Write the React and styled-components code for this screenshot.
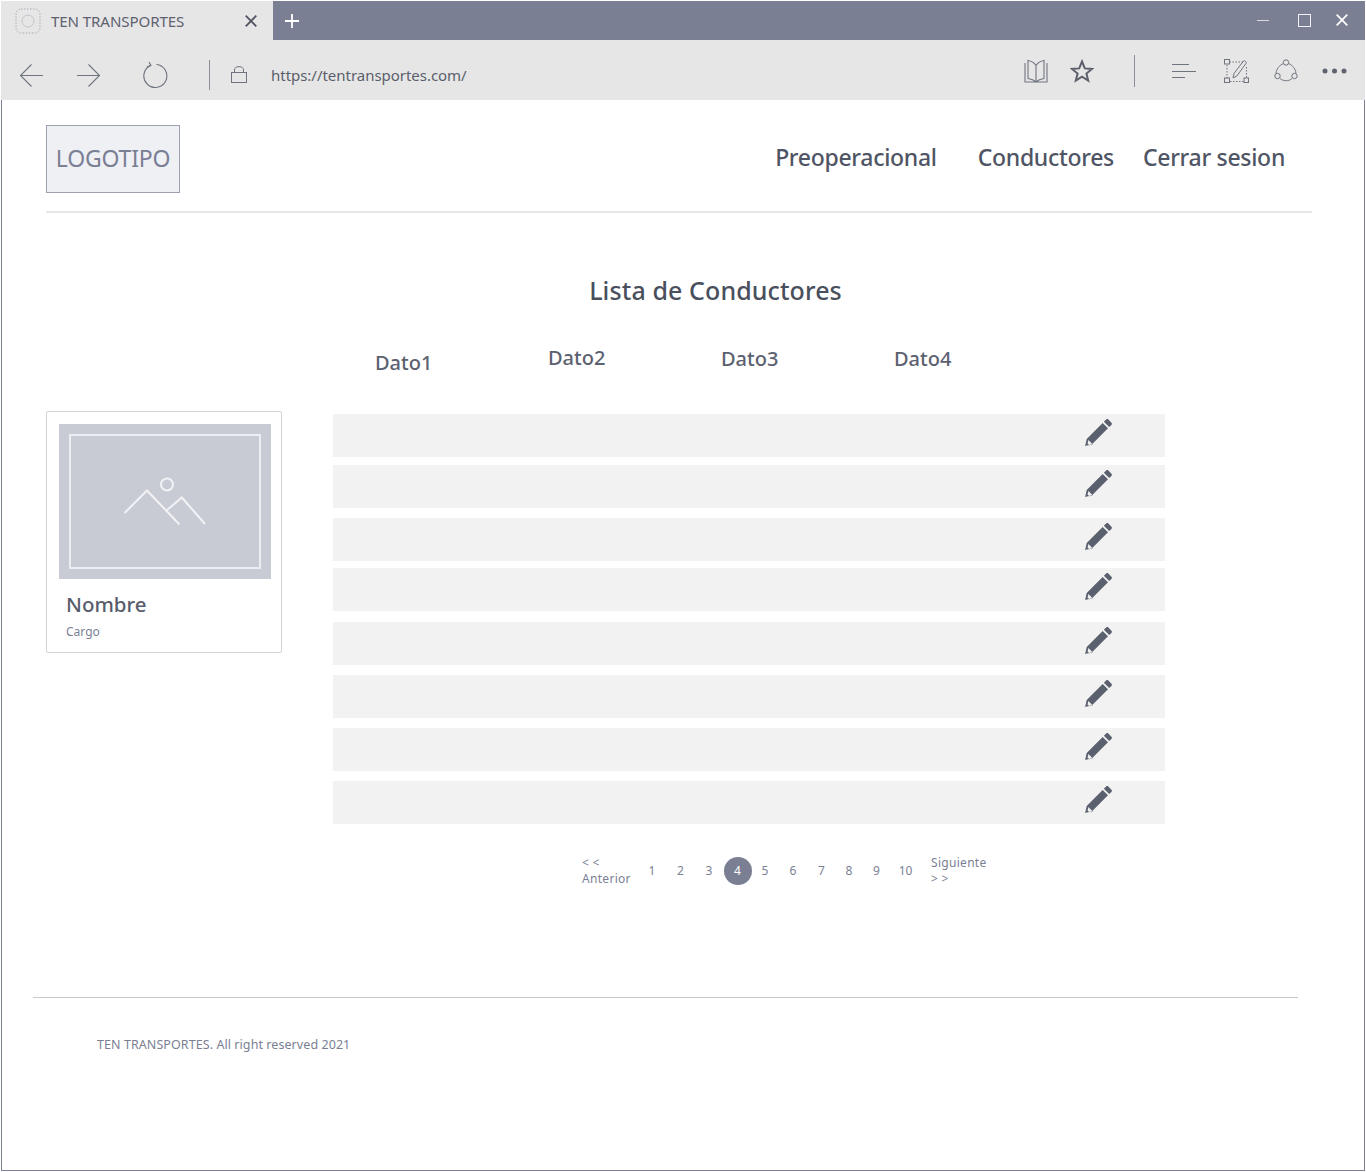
import React from "react";
import styled, { createGlobalStyle } from "styled-components";

const rowGaps = [0, 8, 10, 7, 11, 10, 10, 10];
const pages = [
  { n: 1, w: 29 },
  { n: 2, w: 28 },
  { n: 3, w: 29 },
  { n: 4, w: 28, active: true },
  { n: 5, w: 27 },
  { n: 6, w: 29 },
  { n: 7, w: 28 },
  { n: 8, w: 27 },
  { n: 9, w: 28 },
  { n: 10, w: 30 },
];
const datos = [
  { label: "Dato1", top: 11, left: 42 },
  { label: "Dato2", top: 6, left: 42 },
  { label: "Dato3", top: 7, left: 42 },
  { label: "Dato4", top: 7, left: 42 },
];

const GlobalStyle = createGlobalStyle`
  html, body {
    margin: 0;
    padding: 0;
    background: #fff;
  }
  body {
    font-family: "Noto Sans", "Open Sans", "Liberation Sans", sans-serif;
    color: #5a6070;
  }
`;

const BrowserWindow = styled.div`
  width: 1364px;
  height: 1170px;
  margin: 1px 0 0 1px;
  box-sizing: border-box;
  border-left: 1px solid #7a7f94;
  border-right: 1px solid #7a7f94;
  border-bottom: 1px solid #7a7f94;
  display: flex;
  flex-direction: column;
`;

const TitleBar = styled.div`
  height: 39px;
  margin: 0 -1px;
  background: #7a7f94;
  display: flex;
  align-items: center;
  flex: none;
`;

const Tab = styled.div`
  width: 272px;
  height: 39px;
  background: #e6e6e6;
  display: flex;
  align-items: center;
  padding-left: 14px;
  box-sizing: border-box;
  flex: none;
`;

const TabTitle = styled.span`
  font-size: 15.1px;
  color: #5e6270;
  margin-left: 10px;
  width: 194px;
  white-space: nowrap;
  letter-spacing: -0.1px;
`;

const NewTab = styled.div`
  margin-left: 12px;
  display: flex;
`;

const WindowControls = styled.div`
  margin-left: auto;
  display: flex;
  align-items: center;
  gap: 25px;
  padding: 0 17px 1px 0;
`;

const ToolBar = styled.div`
  height: 60px;
  margin: 0 -1px;
  background: #e6e6e6;
  display: flex;
  align-items: center;
  flex: none;
`;

const NavGroup = styled.div`
  display: flex;
  align-items: center;
  padding: 10px 0 0 18px;
`;

const Separator = styled.div`
  width: 1px;
  height: ${(p) => p.$h || 30}px;
  background: #8b8f99;
  margin: 0 ${(p) => p.$right || 0}px 0 ${(p) => p.$left || 0}px;
  flex: none;
`;

const Url = styled.span`
  font-size: 15px;
  color: #5a5f6b;
  margin-left: 24px;
  letter-spacing: -0.03px;
`;

const ToolIcons = styled.div`
  margin-left: auto;
  display: flex;
  align-items: center;
  padding: 2px 18px 0 0;
`;

const IconSlot = styled.span`
  display: inline-flex;
  margin-left: ${(p) => p.$left || 0}px;
  flex: none;
`;

const Page = styled.main`
  flex: 1;
  display: flex;
  flex-direction: column;
  background: #fff;
  min-height: 0;
`;

const Header = styled.header`
  margin: 25px 52px 0 44px;
  height: 88px;
  box-sizing: border-box;
  border-bottom: 2px solid #e6e7ea;
  display: flex;
  align-items: flex-start;
  justify-content: space-between;
`;

const Logo = styled.div`
  width: 134px;
  height: 68px;
  box-sizing: border-box;
  background: #eff0f4;
  border: 1px solid #9da1b1;
  padding-bottom: 3px;
  display: flex;
  align-items: center;
  justify-content: center;
  font-size: 23px;
  color: #7a7f94;
  letter-spacing: -0.2px;
`;

const Nav = styled.nav`
  display: flex;
  padding: 15px 27px 0 0;
`;

const NavLink = styled.a`
  font-size: 23px;
  font-weight: 500;
  line-height: 34px;
  color: #4f5564;
  margin-left: ${(p) => p.$gap}px;
  letter-spacing: -0.3px;
`;

const Title = styled.h1`
  margin: 57px 0 0 0;
  font-size: 25px;
  line-height: 40px;
  font-weight: 500;
  color: #4a4f5d;
  text-align: center;
  width: 1427px;
  letter-spacing: 0.1px;
`;

const Content = styled.section`
  display: flex;
  margin: 28px 0 0 44px;
  align-items: flex-start;
`;

const Card = styled.article`
  width: 236px;
  height: 242px;
  margin-top: 73px;
  box-sizing: border-box;
  border: 1px solid #d2d3d8;
  border-radius: 2px;
  padding: 12px;
  flex: none;
`;

const Placeholder = styled.div`
  height: 155px;
  width: 212px;
  background: #c8cbd4;
  padding: 10px;
  box-sizing: border-box;
`;

const PlaceholderFrame = styled.div`
  height: 100%;
  box-sizing: border-box;
  border: 2px solid #eceef1;
  display: flex;
  align-items: center;
  justify-content: center;
`;

const CardName = styled.div`
  margin: 10px 0 0 7px;
  font-size: 20.5px;
  font-weight: 500;
  line-height: 30px;
  color: #585d6c;
`;

const CardRole = styled.div`
  margin: 4px 0 0 7px;
  font-size: 12px;
  line-height: 18px;
  color: #7a7f94;
`;

const TableArea = styled.div`
  margin-left: 51px;
  width: 832px;
`;

const DatoRow = styled.div`
  display: flex;
  height: 76px;
`;

const DatoCell = styled.div`
  width: 173px;
  box-sizing: border-box;
  padding: ${(p) => p.$top}px 0 0 ${(p) => p.$left}px;
  font-size: 20px;
  font-weight: 500;
  line-height: 28px;
  color: #5c6170;
`;

const Row = styled.div`
  height: 43px;
  margin-top: ${(p) => p.$gap}px;
  background: #f2f2f2;
  display: flex;
  align-items: flex-start;
  padding: 5px 0 0 751px;
  box-sizing: border-box;
`;

const Pagination = styled.nav`
  display: flex;
  align-items: center;
  height: 44px;
  margin: 25px 0 0 249px;
  color: #7a7f94;
  font-size: 12px;
  line-height: 16px;
`;

const PageEdge = styled.div`
  width: ${(p) => p.$w}px;
  margin-left: ${(p) => p.$left || 0}px;
  letter-spacing: 0.3px;
`;

const PageNumber = styled.div`
  width: ${(p) => p.$w}px;
  display: flex;
  justify-content: center;
`;

const PageDot = styled.span`
  width: 28px;
  height: 28px;
  border-radius: 50%;
  display: flex;
  align-items: center;
  justify-content: center;
  background: ${(p) => (p.$active ? "#7a7f94" : "transparent")};
  color: ${(p) => (p.$active ? "#fff" : "#7a7f94")};
`;

const Footer = styled.footer`
  margin: 104px 66px 0 31px;
  border-top: 1px solid #c9c9cd;
  padding: 38px 0 0 64px;
  font-size: 12.5px;
  line-height: 18px;
  color: #7a7f94;
  letter-spacing: 0.07px;
`;

const stroke = "#70747f";

const FaviconIcon = () => (
  <svg width="26" height="26" viewBox="0 0 26 26" fill="none">
    <rect x="1" y="1" width="24" height="24" rx="5" stroke="#a9acb4" strokeDasharray="1.5 1.5" />
    <circle cx="13" cy="13" r="6" stroke="#c3c5cb" />
  </svg>
);

const CloseIcon = ({ color = "#4e5260", size = 12 }) => (
  <svg width={size} height={size} viewBox="0 0 12 12" fill="none">
    <path d="M.7.7l10.6 10.6M11.3.7L.7 11.3" stroke={color} strokeWidth="1.7" />
  </svg>
);

const PlusIcon = () => (
  <svg width="14" height="14" viewBox="0 0 14 14" fill="none">
    <path d="M7 0v14M0 7h14" stroke="#fff" strokeWidth="1.8" />
  </svg>
);

const MinimizeIcon = () => (
  <svg width="16" height="12" viewBox="0 0 16 12" fill="none">
    <path d="M0 6.5h12" stroke="#d9dae0" strokeWidth="1" />
  </svg>
);

const MaximizeIcon = () => (
  <svg width="13" height="13" viewBox="0 0 13 13" fill="none">
    <rect x=".5" y=".5" width="12" height="12" stroke="#f2f2f5" />
  </svg>
);

const BackIcon = ({ flip }) => (
  <svg width="25" height="25" viewBox="0 0 25 25" fill="none" style={flip ? { transform: "scaleX(-1)" } : undefined}>
    <path d="M24 12.5H1.5M12.5 1.5l-11 11 11 11" stroke={stroke} strokeWidth="1.1" />
  </svg>
);

const RefreshIcon = () => (
  <svg width="26" height="27" viewBox="0 0 26 27" fill="none">
    <path d="M7.5 3.5a11.500 11.500 0 1 0 6-1" stroke={stroke} strokeWidth="1.1" />
    <path d="M6 0l2 3.500-4 1.200" stroke={stroke} strokeWidth="1.1" />
  </svg>
);

const LockIcon = () => (
  <svg width="16" height="18" viewBox="0 0 16 18" fill="none">
    <rect x=".5" y="6.5" width="15" height="10" stroke={stroke} />
    <path d="M3.5 6.5V4a4 3 0 0 1 9 0v2.5" stroke={stroke} />
  </svg>
);

const ReadingIcon = () => (
  <svg width="24" height="24" viewBox="0 0 24 24" fill="none">
    <path d="M1 4v19h22V4M12 6.5C10 3.500 7 2 4 1.500v18c3 .4 6 1.500 8 3.500 2-2 5-3.100 8-3.500v-18c-3 .5-6 2-8 5zM12 6.500V23" stroke={stroke} strokeWidth="1.1" />
  </svg>
);

const StarIcon = () => (
  <svg width="24" height="24" viewBox="0 0 24 24" fill="none">
    <path d="M12 2.5l2.800 6.900 7.200.5-5.600 4.600 1.800 7.100L12 17.700l-6.200 3.900 1.800-7.100L2 9.900l7.200-.5z" stroke="#5c606d" strokeWidth="2" />
  </svg>
);

const HubIcon = () => (
  <svg width="24" height="24" viewBox="0 0 24 24" fill="none">
    <path d="M0 5.5h17M0 12.5h24M0 18.5h13" stroke={stroke} strokeWidth="1.1" />
  </svg>
);

const NoteIcon = () => (
  <svg width="25" height="24" viewBox="0 0 25 24" fill="none">
    <path d="M5.5 3H19M3 6v14M22.5 8v12M6 22.5h14" stroke={stroke} strokeDasharray="1.5 1.5" />
    <rect x=".5" y=".5" width="5" height="4.5" stroke={stroke} />
    <rect x=".5" y="19" width="5" height="4.5" stroke={stroke} />
    <rect x="20" y="19" width="4.5" height="4.5" stroke={stroke} />
    <path d="M9 19l1-4.500L19.500 2c1-1 3.500 1 2.700 2.200L12.800 17z" stroke={stroke} />
  </svg>
);

const ShareIcon = () => (
  <svg width="24" height="24" viewBox="0 0 24 24" fill="none">
    <circle cx="12" cy="3.5" r="2.7" stroke={stroke} />
    <circle cx="3.5" cy="17" r="2.7" stroke={stroke} />
    <circle cx="20.5" cy="17" r="2.7" stroke={stroke} />
    <path d="M9.5 4.500C5 6.500 2.500 10 2 14.300M14.500 4.500c4.500 2 7 5.500 7.500 9.800M6 19.500c3.500 3 8.500 3 12 0" stroke={stroke} />
  </svg>
);

const MoreIcon = () => (
  <svg width="25" height="8" viewBox="0 0 25 8" fill="#5f636f">
    <circle cx="3" cy="4" r="2.5" />
    <circle cx="12.5" cy="4" r="2.5" />
    <circle cx="22" cy="4" r="2.5" />
  </svg>
);

const PencilIcon = () => (
  <svg width="28" height="28" viewBox="0 0 30 30" fill="#5b606e">
    <path d="M1.200 28.800l1.700-7.400L20 4.300l5.700 5.700L8.600 27.100zM4.800 22.600l-1 3.600 2 2 3.600-1z" fillRule="evenodd" />
    <path d="M21.300 3l2.400-2.400c.8-.7 1.700-.7 2.400 0l3.300 3.300c.7.7.7 1.600 0 2.400L27 8.700z" />
  </svg>
);

const MountainIcon = () => (
  <svg width="84" height="50" viewBox="0 0 84 50" fill="none">
    <path d="M1.500 36L24 13.500l32.500 34M43.500 33.500l15.300-13L82 47" stroke="#f2f3f5" strokeWidth="2" />
    <circle cx="44" cy="7.5" r="6" stroke="#f2f3f5" strokeWidth="2" />
  </svg>
);

export default function App() {
  return (
    <>
      <GlobalStyle />
      <BrowserWindow>
        <TitleBar>
          <Tab>
            <FaviconIcon />
            <TabTitle>TEN TRANSPORTES</TabTitle>
            <CloseIcon />
          </Tab>
          <NewTab>
            <PlusIcon />
          </NewTab>
          <WindowControls>
            <MinimizeIcon />
            <MaximizeIcon />
            <CloseIcon color="#fff" />
          </WindowControls>
        </TitleBar>
        <ToolBar>
          <NavGroup>
            <BackIcon />
            <IconSlot $left={32}>
              <BackIcon flip />
            </IconSlot>
            <IconSlot $left={42}>
              <RefreshIcon />
            </IconSlot>
            <Separator $left={40} $right={21} />
            <LockIcon />
            <Url>https://tentransportes.com/</Url>
          </NavGroup>
          <ToolIcons>
            <ReadingIcon />
            <IconSlot $left={22}>
              <StarIcon />
            </IconSlot>
            <Separator $h={32} $left={40} $right={37} />
            <HubIcon />
            <IconSlot $left={28}>
              <NoteIcon />
            </IconSlot>
            <IconSlot $left={25}>
              <ShareIcon />
            </IconSlot>
            <IconSlot $left={24}>
              <MoreIcon />
            </IconSlot>
          </ToolIcons>
        </ToolBar>
        <Page>
          <Header>
            <Logo>LOGOTIPO</Logo>
            <Nav>
              <NavLink $gap={0}>Preoperacional</NavLink>
              <NavLink $gap={41}>Conductores</NavLink>
              <NavLink $gap={29}>Cerrar sesion</NavLink>
            </Nav>
          </Header>
          <Title>Lista de Conductores</Title>
          <Content>
            <Card>
              <Placeholder>
                <PlaceholderFrame>
                  <MountainIcon />
                </PlaceholderFrame>
              </Placeholder>
              <CardName>Nombre</CardName>
              <CardRole>Cargo</CardRole>
            </Card>
            <TableArea>
              <DatoRow>
                {datos.map((d) => (
                  <DatoCell key={d.label} $top={d.top} $left={d.left}>
                    {d.label}
                  </DatoCell>
                ))}
              </DatoRow>
              {rowGaps.map((gap, i) => (
                <Row key={i} $gap={gap}>
                  <PencilIcon />
                </Row>
              ))}
              <Pagination>
                <PageEdge $w={55.5}>
                  {"< <"}
                  <br />
                  Anterior
                </PageEdge>
                {pages.map((p) => (
                  <PageNumber key={p.n} $w={p.w}>
                    <PageDot $active={p.active}>{p.n}</PageDot>
                  </PageNumber>
                ))}
                <PageEdge $w={60} $left={10.5}>
                  Siguiente
                  <br />
                  {"> >"}
                </PageEdge>
              </Pagination>
            </TableArea>
          </Content>
          <Footer>TEN TRANSPORTES. All right reserved 2021</Footer>
        </Page>
      </BrowserWindow>
    </>
  );
}
